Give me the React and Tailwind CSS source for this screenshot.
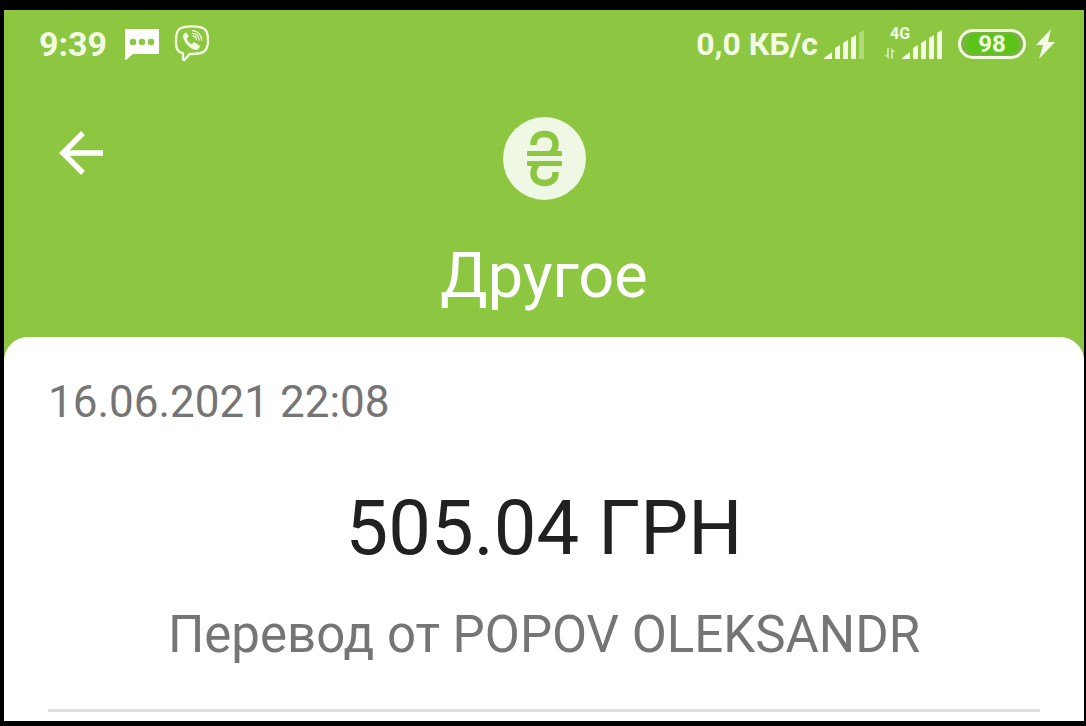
const BARS = [
  'M0 29v-1l8-6v7z',
  'M11 29V18l5-3v14z',
  'M19 29V13l5-3v19z',
  'M27 29V8l5-3v24z',
  'M35 29V3l5-3v29z',
];

function ChatIcon() {
  return (
    <svg width="34" height="31" viewBox="0 0 34 31" aria-hidden="true">
      <path d="M0 0h34v25H8l-7 6H0z" fill="#fff" />
      <circle cx="8" cy="13" r="3.3" fill="#8dc641" />
      <circle cx="17" cy="13" r="3.3" fill="#8dc641" />
      <circle cx="26" cy="13" r="3.3" fill="#8dc641" />
    </svg>
  );
}

function ViberIcon() {
  return (
    <svg width="38" height="38" viewBox="0 5 114 114" fill="none" aria-hidden="true">
      <path
        d="M57 9C78 9 89 11 96 18c8 8 9 18 9 33s-2 25-10 32c-8 7-18 9-38 9h-7l-15 17c-2 2-5 1-5-2V90C20 87 15 83 12 76 9 69 9 60 9 51s1-25 9-33C25 11 36 9 57 9z"
        stroke="#f3fde4"
        strokeWidth="7"
      />
      <path
        d="M37 28c-5 3-8 7-7 12 4 18 18 34 38 40 5 1 9-3 12-8 1-3 0-5-2-6l-12-8c-3-2-5-1-7 2l-2 3c-8-3-13-9-16-17l4-4c2-2 2-4 1-6l-6-8c-1-1-2-1-3 0z"
        fill="#f3fde4"
      />
      <path
        d="M58 22a29 29 0 0 1 28 29M59 30a20 20 0 0 1 19 20M60 38a11 11 0 0 1 10 11"
        stroke="#f3fde4"
        strokeWidth="4"
        strokeLinecap="round"
      />
    </svg>
  );
}

function SignalIcon({ level }) {
  return (
    <svg width="40" height="29" viewBox="0 0 40 29" aria-hidden="true">
      {BARS.map((d, i) => (
        <path key={d} d={d} fill="#f3fde4" fillOpacity={i < level ? 1 : 0.35} />
      ))}
    </svg>
  );
}

function DataArrows() {
  return (
    <svg width="12" height="11" viewBox="0 0 12 11" aria-hidden="true">
      <path d="M3 0h2v11L0 7h3zM7 11V0l5 4H9v7z" fill="#f3fde4" fillOpacity="0.6" />
    </svg>
  );
}

function BoltIcon() {
  return (
    <svg width="19" height="30" viewBox="0 0 19 30" aria-hidden="true">
      <path d="M15 0 0 16h7L3 30l16-17h-7z" fill="#f3fde4" />
    </svg>
  );
}

function BackIcon() {
  return (
    <svg width="44" height="44" viewBox="0 0 44 44" fill="none" aria-hidden="true">
      <path d="M44 22H4M24 2 4 22l20 20" stroke="#fff" strokeWidth="5.5" />
    </svg>
  );
}

function HryvniaIcon() {
  return (
    <svg width="83" height="83" viewBox="0 0 83 83" fill="none" aria-hidden="true">
      <circle cx="41.5" cy="41.5" r="41.5" fill="#eff8e4" />
      <g stroke="#8dc641" strokeWidth="6.4">
        <path d="M30.500 28v-1C30.500 20 35 17 41.500 17S52.500 20 52.500 27c0 4-1 7-5 10" />
        <path d="M52.500 55v1c0 7-4.500 10-11 10S30.500 63 30.500 56c0-4 1-7 5-10" />
      </g>
      <rect x="24" y="34" width="35" height="5" rx="1" fill="#8dc641" />
      <rect x="24" y="44" width="35" height="5" rx="1" fill="#8dc641" />
      <path d="M24 41.500h35" stroke="#eff8e4" strokeWidth="5" />
    </svg>
  );
}

function StatusBar() {
  return (
    <div className="flex h-[68px] items-center justify-between pl-[35px] pr-[29px] text-[#f3fde4]">
      <div className="flex items-center">
        <span className="text-[34px] font-bold">9:39</span>
        <span className="ml-[18px] flex items-center gap-3.5">
          <ChatIcon />
          <ViberIcon />
        </span>
      </div>
      <div className="flex items-center">
        <span className="mr-1.5 text-[32px] font-bold">0,0 КБ/с</span>
        <SignalIcon level={4} />
        <div className="relative ml-5 mr-4 flex items-end gap-1.5">
          <span className="absolute -top-1 left-1.5 text-[16px] leading-4 font-bold">4G</span>
          <DataArrows />
          <SignalIcon level={5} />
        </div>
        <div className="mr-2.5 flex h-[30px] w-[68px] rounded-full border-[3px] border-[#f3fde4] bg-[#7fb244] px-1 py-0.5">
          <span className="flex flex-1 items-center justify-center rounded-full bg-[#5bc418] text-[24px] leading-none font-bold">
            98
          </span>
        </div>
        <BoltIcon />
      </div>
    </div>
  );
}

export default function App() {
  return (
    <div className="flex min-h-screen flex-col bg-black pt-2.5 pr-0.5 pb-[5px] pl-1 font-['Roboto',sans-serif]">
      <div className="flex flex-1 flex-col bg-[#8dc641]">
        <StatusBar />

        <header className="pt-[39px] pb-[25px]">
          <div className="grid grid-cols-[1fr_auto_1fr] items-start px-[55px]">
            <button type="button" aria-label="Назад" className="mt-3.5 w-11">
              <BackIcon />
            </button>
            <HryvniaIcon />
          </div>
          <h1 className="mt-[39px] text-center text-[63px] leading-[73px] text-white">Другое</h1>
        </header>

        <main className="flex-1 rounded-t-[24px] bg-white px-11 pt-10">
          <time dateTime="2021-06-16T22:08" className="block text-[44px] leading-[50px] text-[#757575]">
            16.06.2021 22:08
          </time>
          <p className="mt-14 text-center text-[76px] leading-[90px] text-[#212121]">505.04 ГРН</p>
          <p className="mt-8 text-center text-[51px] leading-[60px] text-[#757575]">
            Перевод от POPOV OLEKSANDR
          </p>
          <hr className="mt-11 border-t-[3px] border-[#e0e0e0]" />
        </main>
      </div>
    </div>
  );
}
